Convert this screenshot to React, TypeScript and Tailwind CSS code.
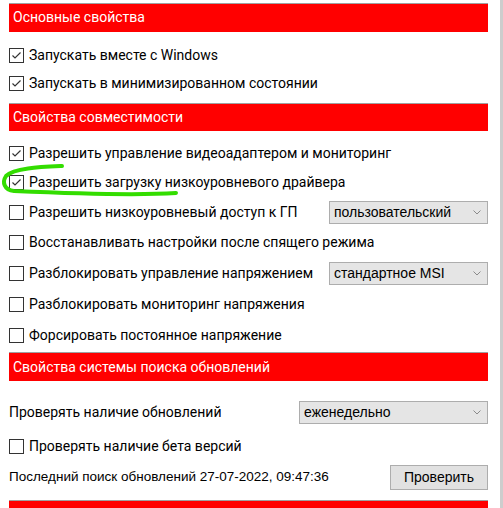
import React from 'react';

const labelFont = "font-['Roboto','Liberation_Sans',sans-serif]";
const winFont = "font-['Liberation_Sans','Arial',sans-serif]";

function SectionHeader({ title, className = '' }: { title: string; className?: string }) {
  return (
    <div
      className={`h-[29px] border-t border-[#a0a0a0] bg-[#ff0000] text-white text-[14px] pl-[4px] flex items-center ${labelFont} ${className}`}
    >
      {title}
    </div>
  );
}

function Checkbox({ checked }: { checked?: boolean }) {
  return (
    <div className="w-[15px] h-[15px] border border-[#333333] bg-white flex items-center justify-center shrink-0">
      {checked && (
        <svg width="13" height="13" viewBox="0 0 13 13">
          <polyline points="2.5,6.5 5,9 10.5,3.5" fill="none" stroke="#333333" strokeWidth="1.2" />
        </svg>
      )}
    </div>
  );
}

function CheckRow({ label, checked, h }: { label: string; checked?: boolean; h: string }) {
  return (
    <div className={`${h} flex items-center gap-[5px] text-[14px] text-black ${labelFont}`}>
      <Checkbox checked={checked} />
      <span>{label}</span>
    </div>
  );
}

function Select({ value, className = '' }: { value: string; className?: string }) {
  return (
    <div
      className={`h-[23px] border border-[#adadad] bg-[#e5e5e5] flex items-center justify-between pl-[4px] pr-[6px] text-[14px] text-black ${winFont} ${className}`}
    >
      <span>{value}</span>
      <svg width="8" height="5" viewBox="0 0 8 5">
        <polyline points="0.5,0.5 4,4 7.5,0.5" fill="none" stroke="#8a8a8a" strokeWidth="1" />
      </svg>
    </div>
  );
}

export default function App() {
  return (
    <div className="w-[503px] h-[508px] bg-white flex overflow-hidden relative">
      <div className="w-[500px] pl-[9px] pr-[12px] flex flex-col">
        <SectionHeader title="Основные свойства" className="mt-[3px]" />
        <div className="pt-[10px] pb-[5px]">
          <CheckRow checked h="h-[28px]" label="Запускать вместе с Windows" />
          <CheckRow checked h="h-[28px]" label="Запускать в минимизированном состоянии" />
        </div>

        <SectionHeader title="Свойства совместимости" />
        <div className="pt-[8px] pb-[1px]">
          <CheckRow checked h="h-[29px]" label="Разрешить управление видеоадаптером и мониторинг" />
          <CheckRow checked h="h-[29px]" label="Разрешить загрузку низкоуровневого драйвера" />
          <div className="h-[30px] flex items-center justify-between">
            <CheckRow h="h-[30px]" label="Разрешить низкоуровневый доступ к ГП" />
            <Select value="пользовательский" className="w-[159px]" />
          </div>
          <CheckRow h="h-[31px]" label="Восстанавливать настройки после спящего режима" />
          <div className="h-[31px] flex items-center justify-between">
            <CheckRow h="h-[31px]" label="Разблокировать управление напряжением" />
            <Select value="стандартное MSI" className="w-[159px]" />
          </div>
          <CheckRow h="h-[31px]" label="Разблокировать мониторинг напряжения" />
          <CheckRow h="h-[31px]" label="Форсировать постоянное напряжение" />
        </div>

        <SectionHeader title="Свойства системы поиска обновлений" />
        <div className="pt-[20px] flex flex-col">
          <div className="h-[23px] flex items-center justify-between">
            <span className={`text-[14px] text-black ${labelFont}`}>Проверять наличие обновлений</span>
            <Select value="еженедельно" className="w-[189px]" />
          </div>
          <div className="mt-[10px]">
            <CheckRow h="h-[24px]" label="Проверять наличие бета версий" />
          </div>
          <div className="mt-[7px] h-[25px] flex items-center justify-between">
            <span className={`text-[13.5px] text-black ${winFont}`}>
              Последний поиск обновлений 27-07-2022, 09:47:36
            </span>
            <button
              className={`w-[98px] h-[25px] border border-[#adadad] bg-[#e1e1e1] text-[14px] text-black ${winFont}`}
            >
              Проверить
            </button>
          </div>
        </div>
        <div className="mt-[10px] h-[8px] border-t border-[#a0a0a0] bg-[#ff0000]" />
      </div>
      <div className="w-[3px] bg-[#cdcdcd]" />

      <svg className="absolute left-0 top-0 pointer-events-none" width="503" height="508">
        <path
          d="M62 166 C40 167 14 168 6 176 C2 182 4 190 14 191 C60 193 130 196 176 193"
          fill="none"
          stroke="#33dd00"
          strokeWidth="4"
          strokeLinecap="round"
        />
      </svg>
    </div>
  );
}
